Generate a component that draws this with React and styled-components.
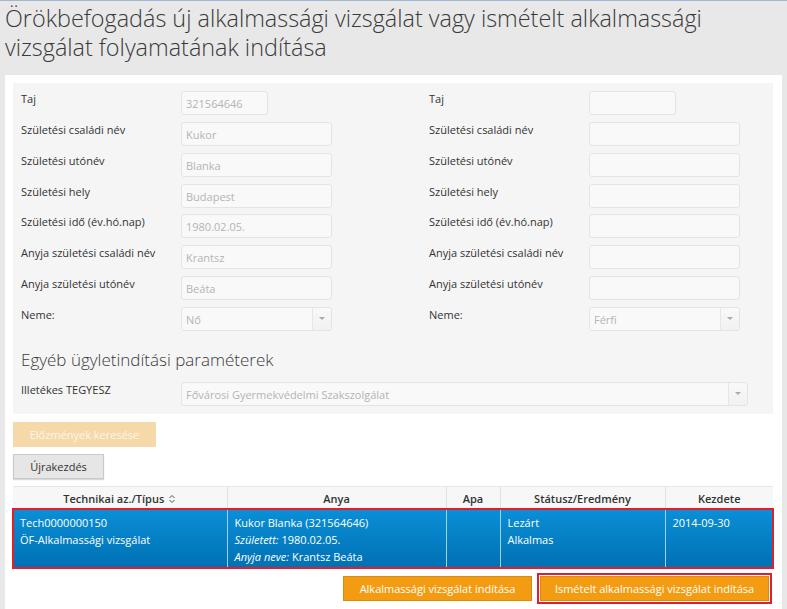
import React from "react";
import styled, { createGlobalStyle } from "styled-components";

const GlobalStyle = createGlobalStyle`
  html, body {
    margin: 0;
    padding: 0;
  }
  body {
    background: #e8e8e8;
    border-top: 1px solid #9fb8d4;
    font-family: "Open Sans", "Liberation Sans", sans-serif;
    color: #333;
  }
`;

const Page = styled.div`
  width: 787px;
  padding: 0 5px 10px;
  box-sizing: border-box;
`;

const Title = styled.h1`
  margin: 0;
  padding-top: 3px;
  font-size: 23.4px;
  line-height: 29px;
  font-weight: 300;
  color: #3a3a3a;
  width: 760px;
`;

const Panel = styled.div`
  margin-top: 13px;
  width: 777px;
  background: #fff;
  padding: 8px 9px 8px 8px;
  box-sizing: border-box;
`;

const FormBox = styled.div`
  background: #f5f5f5;
  padding: 8px 0 8px 8px;
`;

const Columns = styled.div`
  display: grid;
  grid-template-columns: 408px 1fr;
`;

const Column = styled.div`
  display: flex;
  flex-direction: column;
  gap: 6.85px;
`;

const Row = styled.div`
  display: flex;
  align-items: flex-start;
  height: 24px;
`;

const Label = styled.div`
  width: 160px;
  flex: none;
  font-size: 11px;
  line-height: 14px;
  padding-top: 1px;
  color: #333;
`;

const Input = styled.div`
  width: ${(p) => p.$w || 151}px;
  height: 24px;
  box-sizing: border-box;
  border: 1px solid #e4e4e4;
  border-radius: 3px;
  background: #f9f9f9;
  font-size: 11px;
  line-height: 22px;
  padding: 1px 4px 0;
  color: #b4b4b4;
`;

const SelectBox = styled(Input)`
  display: flex;
  padding: 0;
`;

const SelectValue = styled.div`
  flex: 1;
  padding: 1px 4px 0;
`;

const SelectArrow = styled.div`
  width: 18px;
  border-left: 1px solid #e6e6e6;
  background: linear-gradient(#f9f9f9, #f1f1f1);
  border-radius: 0 3px 3px 0;
  display: flex;
  align-items: center;
  justify-content: center;
  &::after {
    content: "";
    border-left: 3px solid transparent;
    border-right: 3px solid transparent;
    border-top: 3px solid #aaa;
  }
`;

const SubHeading = styled.h2`
  margin: 18px 0 11px;
  font-size: 17px;
  line-height: 22px;
  font-weight: 300;
  color: #3a3a3a;
`;

const ButtonStack = styled.div`
  display: flex;
  flex-direction: column;
  align-items: flex-start;
  gap: 7px;
  margin-top: 8px;
`;

const Button = styled.button`
  font-family: "Open Sans", "Liberation Sans", sans-serif;
  font-size: 11px;
  height: 25px;
  padding: 0 12px;
  border-radius: 0;
  cursor: pointer;
  border: 1px solid ${(p) => (p.$variant === "orange" ? "#d88c0e" : p.$variant === "disabled" ? "#f2d9ae" : "#c9c9c9")};
  background: ${(p) => (p.$variant === "orange" ? "#f39c12" : p.$variant === "disabled" ? "#f6d9a8" : "#e6e6e6")};
  color: ${(p) => (p.$variant === "gray" ? "#333" : p.$variant === "disabled" ? "#fdf5e8" : "#fff")};
  box-shadow: ${(p) => (p.$variant === "gray" ? "0 1px 1px rgba(0,0,0,0.15)" : "none")};
`;

const Table = styled.table`
  margin-top: 7px;
  width: 760px;
  border-collapse: collapse;
  table-layout: fixed;
  font-size: 11px;
`;

const Th = styled.th`
  box-sizing: border-box;
  height: 23px;
  padding: 0 6px;
  font-weight: 600;
  background: #f7f7f7;
  color: #333;
  border-left: 1px solid #e2e2e2;
  border-top: 1px solid #e6e6e6;
  text-align: center;
  width: ${(p) => p.$w}px;
  &:first-child {
    border-left: none;
  }
`;

const SelectedRow = styled.tr`
  outline: 2px solid #e21d2c;
  outline-offset: -1px;
`;

const Td = styled.td`
  box-sizing: border-box;
  vertical-align: top;
  padding: 5px 7px 3px;
  height: 58px;
  color: #fff;
  line-height: 17px;
  border-left: 1px solid #9fd0ec;
  background: linear-gradient(#0a8fd6, #0070b4);
  &:first-child {
    border-left: none;
  }
`;

const Em = styled.i`
  font-style: italic;
`;

const SortIcon = () => (
  <svg width="8" height="10" viewBox="0 0 8 10" style={{ marginLeft: 4, verticalAlign: -1 }}>
    <path d="M1.5 4 L4 1.5 L6.5 4 M1.5 6 L4 8.5 L6.5 6" fill="none" stroke="#555" strokeWidth="1" />
  </svg>
);

const Actions = styled.div`
  display: flex;
  justify-content: flex-end;
  align-items: center;
  gap: 5px;
  margin-top: 5px;
  padding-right: 1px;
`;

const Highlight = styled.div`
  border: 2px solid #e21d2c;
  padding: 1px;
  display: flex;
`;

const personRows = [
  ["Taj", "321564646", 87],
  ["Születési családi név", "Kukor"],
  ["Születési utónév", "Blanka"],
  ["Születési hely", "Budapest"],
  ["Születési idő (év.hó.nap)", "1980.02.05."],
  ["Anyja születési családi név", "Krantsz"],
  ["Anyja születési utónév", "Beáta"],
];

function FieldColumn({ values, gender }) {
  return (
    <Column>
      {personRows.map(([label, value, w]) => (
        <Row key={label}>
          <Label>{label}</Label>
          <Input $w={w}>{values ? value : ""}</Input>
        </Row>
      ))}
      <Row>
        <Label>Neme:</Label>
        <SelectBox>
          <SelectValue>{gender}</SelectValue>
          <SelectArrow />
        </SelectBox>
      </Row>
    </Column>
  );
}

export default function App() {
  return (
    <Page>
      <GlobalStyle />
      <Title>
        Örökbefogadás új alkalmassági vizsgálat vagy ismételt alkalmassági vizsgálat folyamatának indítása
      </Title>
      <Panel>
        <FormBox>
          <Columns>
            <FieldColumn values gender="Nő" />
            <FieldColumn gender="Férfi" />
          </Columns>
          <SubHeading>Egyéb ügyletindítási paraméterek</SubHeading>
          <Row>
            <Label>Illetékes TEGYESZ</Label>
            <SelectBox $w={567}>
              <SelectValue>Fővárosi Gyermekvédelmi Szakszolgálat</SelectValue>
              <SelectArrow />
            </SelectBox>
          </Row>
        </FormBox>
        <ButtonStack>
          <Button $variant="disabled" style={{ width: 143 }}>Előzmények keresése</Button>
          <Button $variant="gray" style={{ width: 91 }}>Újrakezdés</Button>
        </ButtonStack>
        <Table>
          <thead>
            <tr>
              <Th $w={214}>
                Technikai az./Típus
                <SortIcon />
              </Th>
              <Th $w={219}>Anya</Th>
              <Th $w={54}>Apa</Th>
              <Th $w={165}>Státusz/Eredmény</Th>
              <Th $w={108}>Kezdete</Th>
            </tr>
          </thead>
          <tbody>
            <SelectedRow>
              <Td>
                Tech0000000150
                <br />
                ÖF-Alkalmassági vizsgálat
              </Td>
              <Td>
                Kukor Blanka (321564646)
                <br />
                <Em>Született:</Em> 1980.02.05.
                <br />
                <Em>Anyja neve:</Em> Krantsz Beáta
              </Td>
              <Td />
              <Td>
                Lezárt
                <br />
                Alkalmas
              </Td>
              <Td>2014-09-30</Td>
            </SelectedRow>
          </tbody>
        </Table>
        <Actions>
          <Button $variant="orange" style={{ width: 189 }}>Alkalmassági vizsgálat indítása</Button>
          <Highlight>
            <Button $variant="orange" style={{ width: 229 }}>Ismételt alkalmassági vizsgálat indítása</Button>
          </Highlight>
        </Actions>
      </Panel>
    </Page>
  );
}
